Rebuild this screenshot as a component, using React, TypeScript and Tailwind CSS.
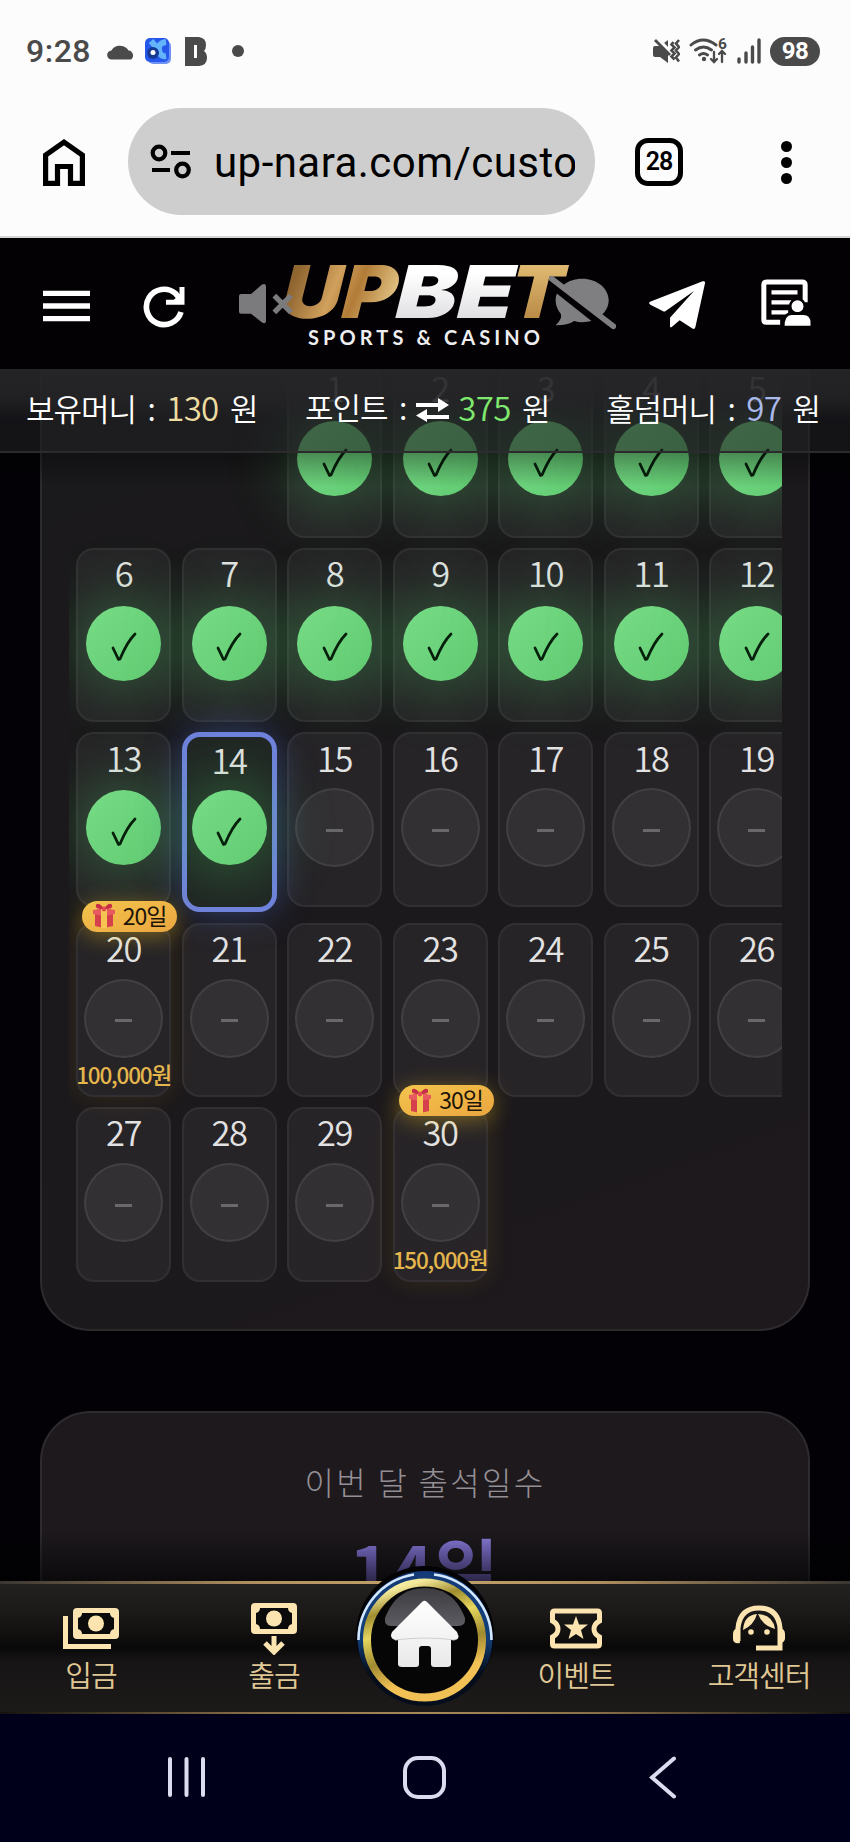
import React from "react";

interface Day {
  day: number;
  done?: boolean;
  today?: boolean;
  reward?: string; // Bonus amount
  streak?: string; // Badge above the cell
}

const CHECKED_UNTIL = 14;

const days: Day[] = Array.from({ length: 30 }, (_, i) => ({
  day: i + 1,
  done: i + 1 <= CHECKED_UNTIL,
  today: i + 1 === CHECKED_UNTIL,
}));
days[19] = { day: 20, reward: "100,000원", streak: "20일" };
days[29] = { day: 30, reward: "150,000원", streak: "30일" };

const GiftIcon = () => (
  <svg width="22" height="26" viewBox="0 0 22 26">
    <path d="M2 9h18v14l-9 2-9-2z" fill="#d5404c" />
    <path d="M0 7l11-2 11 2v4l-11 2-11-2z" fill="#e85a60" />
    <path d="M8 6h6v19l-3 .6-3-.6z" fill="#f5c451" />
    <path d="M11 6C7-1 2 0 3 4c1 2 5 2 8 2zm0 0c4-7 9-6 8-2-1 2-5 2-8 2z" fill="#c62f47" />
    <circle cx="11" cy="6" r="2.4" fill="#e34b55" />
  </svg>
);

const DayCell: React.FC<Day> = ({ day, done, today, reward, streak }) => (
  <div
    className={`relative flex flex-col items-center rounded-[18px] ${
      today
        ? "z-10 h-[180px] border-[5px] border-[#6f82dc] bg-[#202523] shadow-[0_0_36px_rgba(80,110,220,0.42)]"
        : "h-[174.5px] border-2 border-white/5 bg-white/5"
    } ${reward ? "shadow-[0_0_26px_rgba(230,180,30,0.13)]" : ""}`}
  >
    {streak && (
      <div className="absolute -top-[24px] left-[4px] z-20 flex h-[31px] w-[95px] items-center justify-center gap-[8px] rounded-full bg-gradient-to-br from-[#f3c44c] to-[#eba640] text-[23px] tracking-[-1px] text-[#1c1408] shadow-[0_4px_22px_rgba(250,200,30,0.4)]">
        <GiftIcon />
        <span className="-mt-[3px] leading-[30px]">{streak}</span>
      </div>
    )}
    <div
      className={`flex h-[46px] items-center text-[34.500px] font-[350] tracking-[-1.500px] text-[#e2e2e2] ${
        today ? "-mt-[1px] mb-[2px]" : "mb-[4px]"
      }`}
    >
      {day}
    </div>
    <div className="mt-1 flex h-[79px] items-center justify-center">
      {done ? (
        <div className="flex size-[75px] items-center justify-center rounded-full bg-gradient-to-br from-[#76dc86] to-[#62cb72] shadow-[0_0_60px_8px_rgba(74,200,100,0.36)]">
          <svg className="mt-[8px]" width="26" height="30" viewBox="0 0 26 30" fill="none" stroke="#07200c" strokeWidth="2.8" strokeLinecap="round" strokeLinejoin="round">
            <path d="M2 16l5.500 11.500L9 27Q16 10 24 2" />
          </svg>
        </div>
      ) : (
        <div className="flex size-[79px] items-center justify-center rounded-full border-2 border-white/7 bg-white/6">
          <span className="mt-[5px] h-[2.500px] w-[17px] bg-[#69696b]" />
        </div>
      )}
    </div>
    {reward && (
      <div className="flex h-[35px] items-center text-[22.500px] font-medium tracking-[-1.200px] whitespace-nowrap text-[#e4b64c]">
        {reward}
      </div>
    )}
  </div>
);

const StatusBar = () => (
  <div className="flex h-[102px] items-center pr-[30px] pl-[26px] text-[#4a4a4a]">
    <div className="w-[81px] text-[32px] font-medium tracking-[0.500px]">9:28</div>
    <svg width="29" height="17" viewBox="0 0 29 17" fill="currentColor">
      <path d="M5 16.500a4.500 4.500 0 0 1-.6-9A9.500 8.500 0 0 1 20 5.500a7 7 0 0 1 1.500 2 5 5 0 0 1 2.500 9z" />
    </svg>
    <svg className="ml-[9px]" width="27" height="27" viewBox="0 0 27 27">
      <rect x="3" y="3" width="23" height="23" rx="5" fill="#6f93f5" />
      <rect width="24" height="24" rx="5" fill="#2557ea" />
      <path d="M6 3l6 7M21 4q-8 1-7 8t7 6" stroke="#63b4fb" strokeWidth="6" fill="none" />
      <circle cx="8" cy="15" r="6" fill="#143a96" />
      <circle cx="8" cy="14.500" r="2.500" fill="#fff" />
    </svg>
    <svg className="ml-[13px]" width="22" height="29" viewBox="0 0 22 29" fill="currentColor">
      <path fillRule="evenodd" d="M0 0h14q7 1 7 8 0 4-2 6 3 2 3 7 0 7-8 8H0zM9 8v13h3V8z" />
    </svg>
    <span className="ml-[25px] size-[12px] rounded-full bg-current" />

    <svg className="ml-auto" width="28" height="26" viewBox="0 0 28 26" fill="none" stroke="currentColor">
      <path d="M1 10q0-2 2-2h5l8-6v23l-8-6H3q-2 0-2-2z" fill="currentColor" stroke="none" />
      <path d="M4-1l15 16" stroke="#fcfcfd" strokeWidth="4" />
      <path d="M3 2l15 15" strokeWidth="2.800" />
      <path d="M21.500 4l-2 2.500 3 3-3 3 3 3-3 3 3 3M27 2l-3 3.500 3 3.500-3 3.500 3 3.500-3 3.500 3 4" strokeWidth="2.600" />
    </svg>
    <svg className="ml-[9px]" width="38" height="28" viewBox="0 0 38 28" fill="none" stroke="currentColor" strokeWidth="2.900" strokeLinecap="round">
      <path d="M2 8q12-10 25 0M6.500 13q8-6 16 0M10.500 18q4-3 8 0" />
      <circle cx="15" cy="22" r="2.200" fill="currentColor" stroke="none" />
      <path d="M25 15v10m-3-3l3 3 3-3M33 25V14m-3 3l3-3 3 3" strokeWidth="2.300" />
      <text x="29" y="12" fill="currentColor" stroke="none" fontSize="15.500" fontFamily="Roboto" fontWeight="700">6</text>
    </svg>
    <svg className="ml-[10px]" width="24" height="26" viewBox="0 0 24 26" stroke="currentColor" strokeWidth="3.400" strokeLinecap="round">
      <path d="M2 21v3M9 15v9M15.500 9v15M22 2v22" />
    </svg>
    <span className="ml-[9px] flex h-[29px] w-[50px] items-center justify-center rounded-full bg-[#4a4a4a] text-[24px] font-bold tracking-[-0.500px] text-white">
      98
    </span>
  </div>
);

const BrowserBar = () => (
  <div className="flex h-[136px] items-start border-b-2 border-[#d5d5d6] pt-[6px] text-black">
    <svg className="mt-[29px] ml-[42px]" width="44" height="50" viewBox="0 0 44 50" fill="none" stroke="currentColor" strokeWidth="5.200">
      <path d="M3.600 46.400V18L22 5.200 40.400 18v28.400H28.500V29.500h-13v16.900z" />
    </svg>
    <div className="ml-[42px] flex h-[107px] w-[467px] items-center rounded-full bg-[#cececf] pl-[22px]">
      <svg width="42" height="36" viewBox="0 0 42 36" fill="none" stroke="currentColor" strokeWidth="4.200">
        <circle cx="9" cy="9" r="6.300" />
        <circle cx="32.500" cy="26" r="6.300" />
        <path d="M21 9h19M2 26h18" />
      </svg>
      <div className="mt-[3px] ml-[22px] w-[361px] overflow-hidden text-[42px] leading-[60px] tracking-[0.450px] whitespace-nowrap">
        up-nara.com/custo
      </div>
    </div>
    <div className="mt-[30px] ml-[40px] flex size-[48px] items-center justify-center rounded-[13px] border-[5px] border-black text-[25px] font-semibold tracking-[-1px]">
      28
    </div>
    <div className="mt-[33px] ml-[98px] flex flex-col gap-[5px]">
      <span className="size-[11px] rounded-full bg-black" />
      <span className="size-[11px] rounded-full bg-black" />
      <span className="size-[11px] rounded-full bg-black" />
    </div>
  </div>
);

const Logo = () => (
  <svg className="absolute top-[22px] left-[278px]" width="300" height="90" viewBox="0 0 300 90">
    <defs>
      <linearGradient id="gold" x1="0" y1="0" x2="120" y2="20" gradientUnits="userSpaceOnUse">
        <stop offset="0" stopColor="#8f6530" />
        <stop offset="0.350" stopColor="#d0a05c" />
        <stop offset="0.550" stopColor="#b27c38" />
        <stop offset="1" stopColor="#f3dda0" />
      </linearGradient>
      <linearGradient id="goldT" x1="0" y1="0" x2="0" y2="1">
        <stop offset="0" stopColor="#ecc980" />
        <stop offset="1" stopColor="#ad7c38" />
      </linearGradient>
      <linearGradient id="silver" x1="0" y1="0" x2="0" y2="1">
        <stop offset="0.300" stopColor="#ffffff" />
        <stop offset="1" stopColor="#d4d4d8" />
      </linearGradient>
    </defs>
    <g fontFamily="Inter" fontWeight="900" fontSize="73" transform="translate(0 58) skewX(-14)">
      <text x="-1" y="0" textLength="115" lengthAdjust="spacingAndGlyphs" fill="url(#gold)">UP</text>
      <text x="113" y="0" textLength="118" lengthAdjust="spacingAndGlyphs" fill="url(#silver)">BE</text>
      <text x="227" y="0" textLength="53" lengthAdjust="spacingAndGlyphs" fill="url(#goldT)">T</text>
    </g>
    <text x="30" y="85" fontFamily="Lato" fontWeight="700" fontSize="20" textLength="232" fill="#eeeef0">SPORTS &amp; CASINO</text>
  </svg>
);

const Header = () => (
  <div className="relative flex h-[131px] shrink-0 items-center bg-[#030104] pl-[43px] text-white">
    <Logo />
    <svg width="47" height="60" viewBox="129 117 141 180" fill="currentColor">
      <path d="M129 167h141v16H129zM129 205h141v16H129zM129 243h141v16H129z" />
    </svg>
    <svg className="ml-[53px]" width="42" height="60" viewBox="428 117 126 180" fill="none" stroke="currentColor" strokeWidth="17">
      <path d="M542 231A53 53 0 1 1 525 175L540 192" />
      <path d="M545 156v46h-48" strokeWidth="15" />
      <path d="M513 202l35-35v35z" fill="currentColor" stroke="none" />
    </svg>
    <svg className="relative ml-[54px] text-[#7b7b7d]" width="54" height="60" viewBox="716 117 162 180" fill="currentColor">
      <path d="M722 177h30l32-28q13-7 13 7v100q0 14-13 6l-32-26h-30q-6 0-6-6v-47q0-6 6-6z" />
      <path d="M822 182l50 50M872 182l-50 50" stroke="currentColor" strokeWidth="16" />
    </svg>
    <svg className="relative ml-[256px]" width="67" height="60" viewBox="370 117 202 180">
      <path d="M470 131c45 0 80 29 80 65s-35 66-80 66q-12 0-24-4-22 14-56 13 20-18 16-34-16-18-16-41c0-36 35-65 80-65z" fill="#7f7f81" />
      <path d="M384 154l166 132" stroke="#030104" strokeWidth="21" />
      <path d="M378 131l186 143" stroke="#7f7f81" strokeWidth="17" strokeLinecap="round" />
    </svg>
    <svg className="ml-[33px]" width="56" height="60" viewBox="669 117 168 180" fill="currentColor">
      <path d="M672 200l158-61q8-2 7 6l-29 132q-3 8-10 3l-37-24-24 20q-5 4-5-3v-25l72-80-85 60q-4 3-9 0l-37-19q-7-5-1-9z" />
    </svg>
    <svg className="ml-[56px]" width="50" height="60" viewBox="1005 117 149 180" fill="none" stroke="currentColor" strokeWidth="15">
      <path d="M1062 262h-40q-9 0-9-8V150q0-9 9-9h106q9 0 9 9v52" />
      <path d="M1036 172h78M1036 202h60M1036 232h50" strokeWidth="13" />
      <circle cx="1114" cy="214" r="22" fill="currentColor" stroke="#030104" strokeWidth="8" />
      <path d="M1071 276q0-40 25-40h36q25 0 25 28v12z" fill="currentColor" stroke="#030104" strokeWidth="8" />
    </svg>
  </div>
);

const Amount: React.FC<{ className: string; children: React.ReactNode }> = ({ className, children }) => (
  <span className={`text-[33px] tracking-[-0.700px] ${className}`}>{children}</span>
);

const MoneyBar = () => (
  <div className="absolute inset-x-0 top-0 z-30">
    <div className="flex h-[84px] items-center border-b-2 border-[#2b2b2d] bg-[linear-gradient(180deg,rgba(38,37,40,0.94)_0%,rgba(36,35,38,0.9)_35%,rgba(30,30,33,0.62)_62%,rgba(30,30,33,0.62)_100%)] pb-[5px] pl-[26px] text-[31px] font-[350] tracking-[-1px] text-white [word-spacing:5.500px]">
      <div className="w-[279px] whitespace-pre">
        보유머니 : <Amount className="text-[#eddca0]">130</Amount> 원
      </div>
      <div className="flex w-[301px] items-center whitespace-pre">
        포인트 :
        <svg className="mt-1 ml-[10px]" width="33" height="24" viewBox="0 0 33 24" fill="currentColor">
          <path d="M0 5h22V0l11 7-11 7V9H0zM33 21H11v3L0 17.500 11 11v6h22z" />
        </svg>
        <div className="ml-[9px]">
          <Amount className="text-[#7fe86e]">375</Amount> 원
        </div>
      </div>
      <div className="whitespace-pre">
        홀덤머니 : <Amount className="text-[#a9b9ea]">97</Amount> 원
      </div>
    </div>
    <div className="h-[34px] bg-gradient-to-b from-black/35 to-transparent" />
  </div>
);

const HomeButton = () => (
  <svg className="absolute -top-[18px] left-[350px]" width="150" height="150" viewBox="0 0 150 150">
    <defs>
      <linearGradient id="ring" x1="0" y1="0" x2="0.300" y2="1">
        <stop offset="0" stopColor="#fdf6b0" />
        <stop offset="0.120" stopColor="#f4e99a" />
        <stop offset="0.280" stopColor="#a08d30" />
        <stop offset="0.450" stopColor="#e6d65e" />
        <stop offset="0.680" stopColor="#a08a30" />
        <stop offset="0.900" stopColor="#f2c155" />
      </linearGradient>
      <linearGradient id="blue" x1="0" y1="0" x2="0" y2="1">
        <stop offset="0" stopColor="#143a78" />
        <stop offset="0.500" stopColor="#123f78" />
        <stop offset="0.750" stopColor="#060e1c" />
      </linearGradient>
      <linearGradient id="gloss" x1="0" y1="0" x2="0" y2="1">
        <stop offset="0" stopColor="#3c3c41" />
        <stop offset="1" stopColor="#5c5c62" />
      </linearGradient>
      <linearGradient id="house" x1="0" y1="0" x2="0" y2="1">
        <stop offset="0" stopColor="#ffffff" />
        <stop offset="1" stopColor="#e9e9e9" />
      </linearGradient>
    </defs>
    <circle cx="75" cy="72" r="69" fill="#030306" />
    <circle cx="75" cy="75.500" r="67.500" fill="url(#blue)" />
    <path d="M8.500 77A66 66 0 0 1 64 11.500M84 11.500A66 66 0 0 1 141.500 77" fill="none" stroke="#d4e8ff" strokeWidth="2.600" />
    <circle cx="74.500" cy="77" r="57.500" fill="#070607" stroke="url(#ring)" strokeWidth="8" />
    <path d="M35 55C42 37 54 25 75 25S108 37 115 55Q116 63 108 63H41Q34 63 35 55z" fill="url(#gloss)" />
    <path d="M72 39q2.500-2.500 5 0l30 30q4 8-3 8h-3v24q0 3-4 3H84q-3 0-3-3V86q0-3-3-3h-6q-3 0-3 3v15q0 3-3 3H52q-4 0-4-3V77h-3q-6-2-3-8z" fill="url(#house)" />
    <path d="M45 77q30-4 60 0" stroke="#cfcfcf" strokeWidth="1.200" fill="none" />
  </svg>
);

const Banknote = () => (
  <>
    <rect width="46" height="31" rx="4" fill="currentColor" />
    <path d="M9 5h28q0 4 4 5v11q-4 1-4 5H9q0-4-4-5V10q4-1 4-5z" fill="#0c0b0b" />
    <circle cx="23" cy="15.500" r="8" fill="currentColor" />
  </>
);

const NavItem: React.FC<{ label: string; className: string; children: React.ReactNode }> = ({
  label,
  className,
  children,
}) => (
  <div className={`flex flex-col items-center text-[#fbe4b0] ${className}`}>
    <svg width="60" height="54" viewBox="0 0 60 54" fill="none">
      {children}
    </svg>
    <div className="mt-[1px] text-[29px] leading-[36px] font-[350] tracking-[-1px] text-[#e0c894]">{label}</div>
  </div>
);

const BottomNav = () => (
  <div className="absolute inset-x-0 bottom-0 z-30">
    <div className="h-[50px] bg-gradient-to-b from-transparent to-black/60" />
    <div className="relative h-[133px] bg-[linear-gradient(180deg,#232220_0%,#1a1918_25%,#0a0909_50%,#161414_60%,#1d1a1a_100%)]">
      <div className="h-[3px] bg-[linear-gradient(90deg,#3a3632,#b09060_30%,#c6a268_50%,#b09060_70%,#3a3632)]" />
      <div className="flex h-[128px] pt-[17px]">
        <NavItem className="ml-[31px] w-[120px]" label="입금">
          <g transform="translate(12 7)"><Banknote /></g>
          <path d="M4.500 15v30.500H50" stroke="currentColor" strokeWidth="5" />
        </NavItem>
        <NavItem className="ml-[63px] w-[120px]" label="출금">
          <g transform="translate(7 2)"><Banknote /></g>
          <path d="M30 35v15M21 42l9 9 9-9" stroke="currentColor" strokeWidth="5" />
        </NavItem>
        <NavItem className="ml-[182px] w-[120px]" label="이벤트">
          <path d="M8.500 10H51.500Q53.500 10 53.500 12V20Q48 23 48 28T53.500 36V43Q53.500 45 51.500 45H8.500Q6.500 45 6.500 43V36Q12 33 12 28T6.500 20V12Q6.500 10 8.500 10z" stroke="currentColor" strokeWidth="5" />
          <path d="M30 15l3 8.500h9L35 29l2.500 9L30 33 22.500 38 25 29l-7-5.500h9z" fill="currentColor" />
        </NavItem>
        <NavItem className="ml-[63px] w-[120px]" label="고객센터">
          <path d="M9 40V27Q11 7 30 7T51 27V47H27" stroke="currentColor" strokeWidth="5" />
          <path d="M9 27q-5 1-5 6v5q0 5 7 4zM51 27q5 1 5 6v5q-1 4-5 4z" fill="currentColor" />
          <path d="M14 29q1-15 14-16-3 11-14 16zM29 13q15 1 17 15-13-4-17-15z" fill="currentColor" />
          <circle cx="22" cy="31" r="2.800" fill="currentColor" />
          <circle cx="38" cy="31" r="2.800" fill="currentColor" />
        </NavItem>
      </div>
      <div className="h-[2px] bg-[linear-gradient(90deg,#14120f,#8a7048_30%,#a88a58_50%,#8a7048_70%,#14120f)]" />
      <HomeButton />
    </div>
  </div>
);

const SystemNav = () => (
  <div className="flex h-[128px] shrink-0 items-center bg-[#00001a] pb-[2px] pl-[167px] text-[#dcdcf0]">
    <svg width="39" height="42" viewBox="0 0 39 42" stroke="currentColor" strokeWidth="4" strokeLinecap="round">
      <path d="M3 3v36M19.500 3v36M36 3v36" />
    </svg>
    <svg className="ml-[197px]" width="43" height="43" viewBox="0 0 43 43" fill="none" stroke="currentColor" strokeWidth="4">
      <rect x="2" y="2" width="39" height="39" rx="13" />
    </svg>
    <svg className="ml-[203px]" width="28" height="43" viewBox="0 0 28 43" fill="none" stroke="currentColor" strokeWidth="4" strokeLinecap="round">
      <path d="M25 2.500L3 21.500 25 40.500" />
    </svg>
  </div>
);

export default function App() {
  return (
    <div className="flex h-[1842px] w-[850px] flex-col overflow-hidden bg-[#fcfcfd] font-['Noto_Sans_CJK_KR',sans-serif]">
      <div className="h-[238px] shrink-0 font-['Roboto',sans-serif]">
        <StatusBar />
        <BrowserBar />
      </div>
      <Header />

      {/* Scrolled page content */}
      <div className="relative flex-1 overflow-hidden bg-[#030105]">
        <MoneyBar />
        <div className="mx-[40px] -mt-[60px] h-[1022px] rounded-[50px] border-2 border-white/8 bg-[linear-gradient(160deg,#1a191b,#1d191d)] pt-[52px] pl-[27px]">
          <div className="w-[713px] overflow-hidden pb-10 pl-[7px]">
            <div className="grid w-[728px] grid-cols-[repeat(7,95px)] items-start gap-x-[10.500px] gap-y-[10.200px]">
              <div className="col-span-2" />
              {days.map((d) => (
                <DayCell key={d.day} {...d} />
              ))}
            </div>
          </div>
        </div>

        <div className="mx-[40px] mt-[80px] flex h-[300px] flex-col items-center rounded-[50px] border-2 border-white/8 bg-[#1d191d] pt-[44px]">
          <div className="text-[32px] leading-[48px] font-light tracking-[2.300px] text-[#948f95]">이번 달 출석일수</div>
          <div className="mt-[14px] bg-gradient-to-b from-[#9688ee] to-[#5a4ca0] bg-clip-text text-[69px] leading-[96px] font-bold tracking-[2px] text-transparent">
            14일
          </div>
        </div>
        <BottomNav />
      </div>

      <SystemNav />
    </div>
  );
}
